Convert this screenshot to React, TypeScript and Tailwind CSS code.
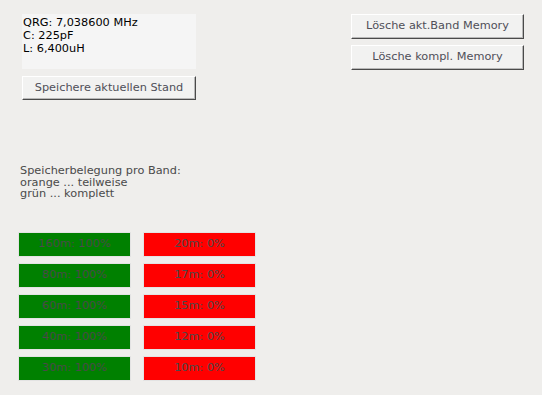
import React from 'react';

const bands = [
  { left: '160m: 100%', right: '20m: 0%' },
  { left: '80m: 100%', right: '17m: 0%' },
  { left: '60m: 100%', right: '15m: 0%' },
  { left: '40m: 100%', right: '12m: 0%' },
  { left: '30m: 100%', right: '10m: 0%' },
];

function TkButton({ label, className = '' }: { label: string; className?: string }) {
  return (
    <button
      className={`flex items-center justify-center bg-[#f2f2f1] border border-t-white border-l-white border-b-[#4a4a4a] border-r-[#4a4a4a] shadow-[inset_-1px_-1px_0_#b8b8b8] text-[#4f4f58] text-[11.3px] ${className}`}
    >
      {label}
    </button>
  );
}

function BandCell({ text, color }: { text: string; color: string }) {
  return (
    <div className="h-[25px] border border-[#e3e3e3] p-0">
      <div className={`h-full flex items-center justify-center text-[11.3px] text-[#4a4a4a] ${color}`}>{text}</div>
    </div>
  );
}

export default function App() {
  return (
    <div className="w-[542px] h-[395px] bg-[#efeeec] pt-[14px] font-['DejaVu_Sans',sans-serif] text-[11.3px] overflow-hidden">
      <div className="flex">
        <div className="ml-[22px] w-[174px]">
          <div className="h-[55px] bg-[#f5f5f5] pl-px pt-[2px] leading-[13px] text-black">
            <div>QRG: 7,038600 MHz</div>
            <div>C: 225pF</div>
            <div>L: 6,400uH</div>
          </div>
          <TkButton label="Speichere aktuellen Stand" className="mt-[7px] w-[174px] h-[24px]" />
        </div>
        <div className="ml-[155px] w-[173px] flex flex-col gap-[6px]">
          <TkButton label="Lösche akt.Band Memory" className="w-full h-[25px]" />
          <TkButton label="Lösche kompl. Memory" className="w-full h-[25px]" />
        </div>
      </div>

      <div className="mt-[65px] pl-[20px] leading-[11.5px] text-[#4a4a4a]">
        <div>Speicherbelegung pro Band:</div>
        <div>orange ... teilweise</div>
        <div>grün ... komplett</div>
      </div>

      <div className="mt-[32.5px] pl-[18px] grid grid-cols-[113px_113px] gap-x-[12px] gap-y-[6px]">
        {bands.map((b) => (
          <React.Fragment key={b.left}>
            <BandCell text={b.left} color="bg-[#008000]" />
            <BandCell text={b.right} color="bg-[#ff0000]" />
          </React.Fragment>
        ))}
      </div>
    </div>
  );
}
